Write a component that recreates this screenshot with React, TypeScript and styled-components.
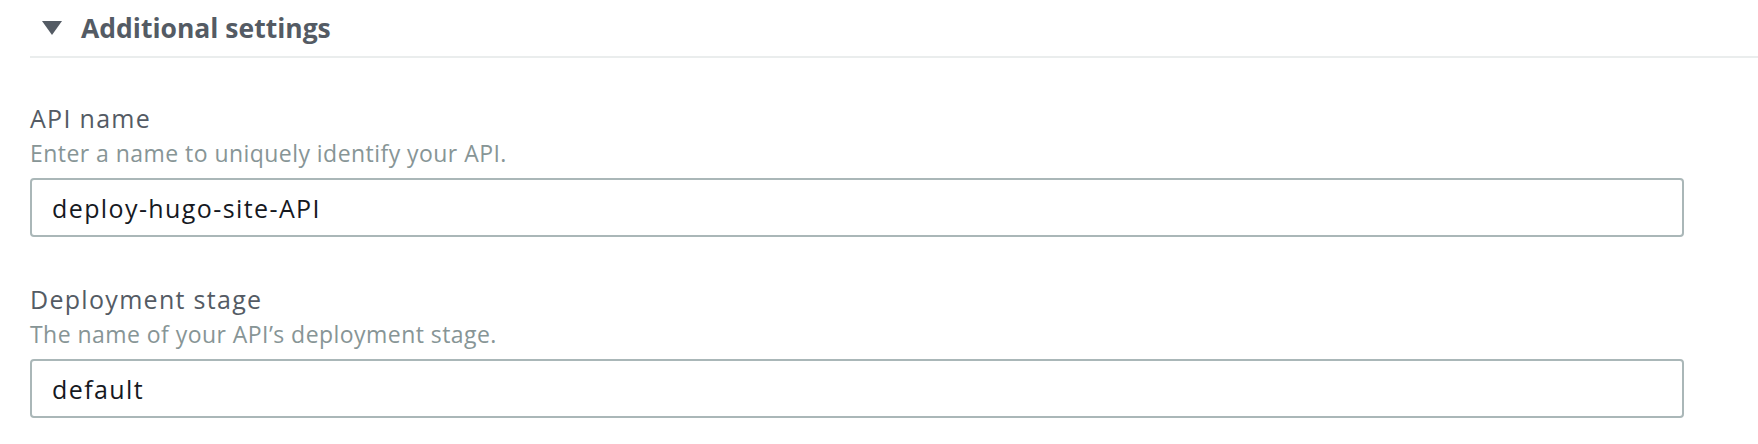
import React from 'react';
import styled, { createGlobalStyle } from 'styled-components';

const GlobalStyle = createGlobalStyle`
    body {
        margin: 0;
        background: #ffffff;
        font-family: "Open Sans", "Liberation Sans", Arial, sans-serif;
    }
`;

const Page = styled.div`
    display: flex;
    flex-direction: column;
    width: 1758px;
`;

const Header = styled.div`
    display: flex;
    align-items: center;
    height: 56px;
    margin-left: 30px;
    padding-left: 12px;
    gap: 19px;
    border-bottom: 2px solid #eaeded;
`;

const Caret = styled.svg`
    width: 20px;
    height: 14px;
    flex: none;
`;

const Title = styled.span`
    font-size: 26.5px;
    font-weight: 700;
    color: #545b64;
    line-height: 32px;
`;

const Fields = styled.div`
    display: flex;
    flex-direction: column;
    gap: 46px;
    padding: 44px 74px 0 30px;
`;

const Field = styled.div`
    display: flex;
    flex-direction: column;
`;

const Label = styled.label`
    font-size: 25px;
    letter-spacing: 1.3px;
    line-height: 32px;
    color: #545b64;
`;

const Description = styled.span`
    margin-top: 4px;
    font-size: 23px;
    letter-spacing: 0.45px;
    line-height: 30px;
    color: #879596;
`;

const Input = styled.input`
    box-sizing: border-box;
    margin-top: 10px;
    height: 59px;
    width: 100%;
    padding: 0 20px;
    border: 2px solid #aab7b8;
    border-radius: 4px;
    font-family: "Open Sans", "Liberation Sans", Arial, sans-serif;
    font-size: 25px;
    letter-spacing: 1.4px;
    color: #16191f;
    background: #ffffff;
    outline: none;
`;

const FormField = (props: { label: string; description: string; value: string }) => {
    return (
        <Field>
            <Label>{props.label}</Label>
            <Description>{props.description}</Description>
            <Input defaultValue={props.value} />
        </Field>
    );
};

export default function App() {
    return (
        <>
            <GlobalStyle />
            <Page>
                <Header>
                    <Caret viewBox="0 0 20 14">
                        <polygon points="0,0 20,0 10,14" fill="#545b64" />
                    </Caret>
                    <Title>Additional settings</Title>
                </Header>
                <Fields>
                    <FormField
                        label="API name"
                        description="Enter a name to uniquely identify your API."
                        value="deploy-hugo-site-API"
                    />
                    <FormField
                        label="Deployment stage"
                        description="The name of your API’s deployment stage."
                        value="default"
                    />
                </Fields>
            </Page>
        </>
    );
}
